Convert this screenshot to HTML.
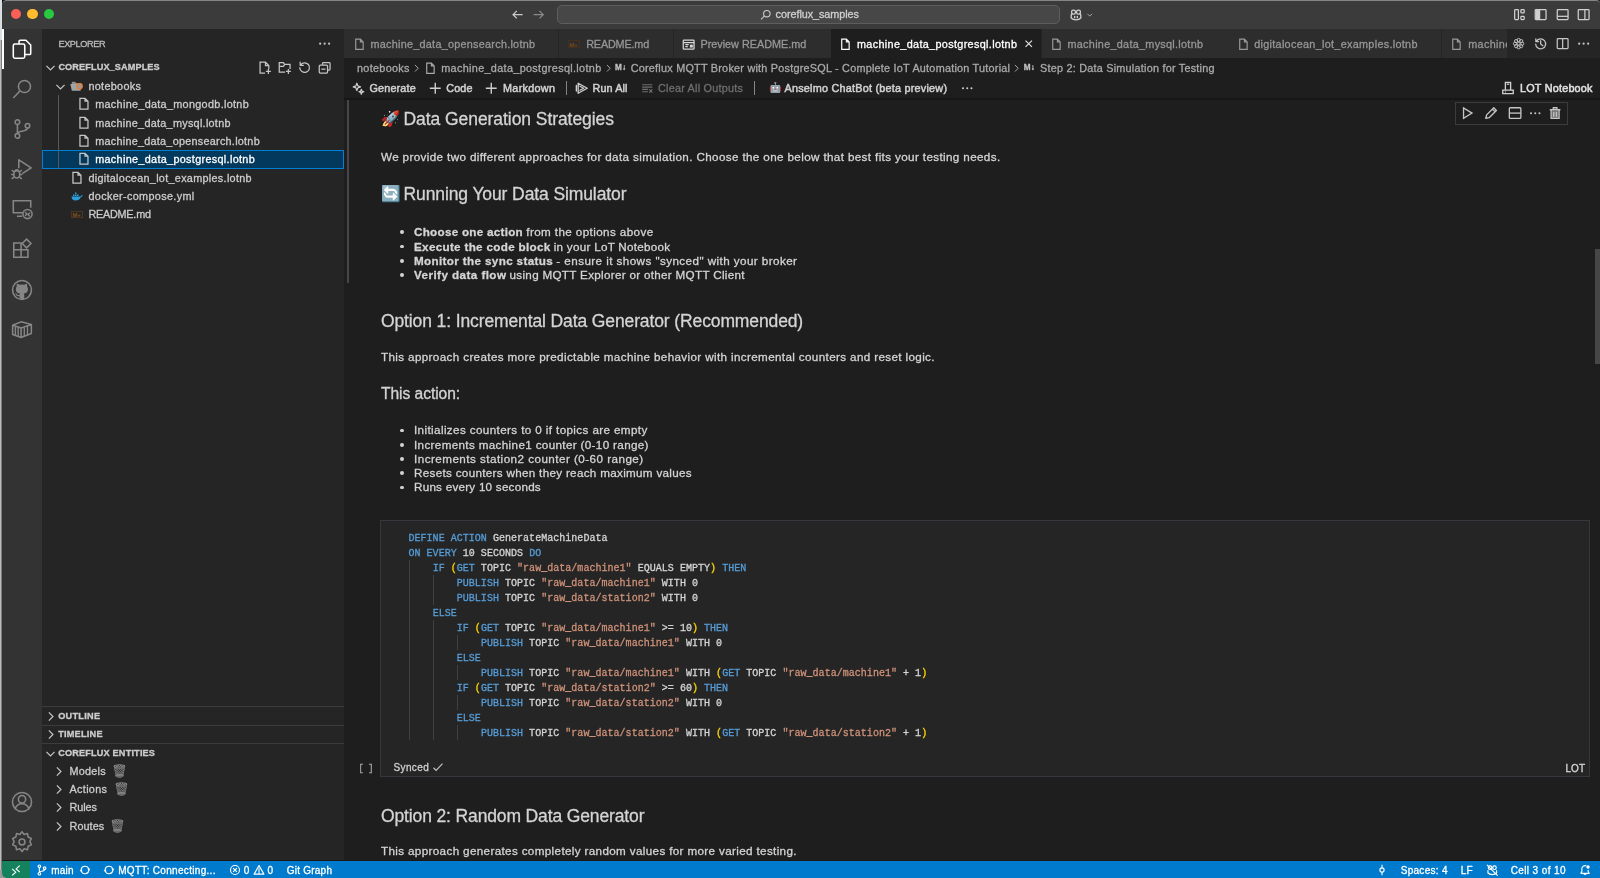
<!DOCTYPE html>
<html lang="en"><head><meta charset="utf-8"><title>machine_data_postgresql.lotnb — coreflux_samples</title>
<style>
html,body{margin:0;padding:0;background:#1e1e1e;overflow:hidden}
body{width:1600px;height:878px;position:relative;font-family:"Liberation Sans", sans-serif;font-size:10.83px;color:#ccc;will-change:transform}
.r{position:absolute;box-sizing:border-box}
.i{position:absolute;overflow:visible}
.t{position:absolute;white-space:pre;line-height:1;margin:0;padding:0;font-weight:400;-webkit-text-stroke:0.3px currentColor}
.m{font-family:"Liberation Mono", monospace}
b{font-weight:700}
.ns{-webkit-text-stroke:0}
.hv{-webkit-text-stroke:0.5px currentColor}
.g{filter:grayscale(1) brightness(.7)}
.k{color:#569cd6}.s{color:#ce9178}.p{color:#ffd700}
</style></head>
<body>
<header class="titlebar">
<div class="r" style="left:0.00px;top:0.00px;width:1600.00px;height:878.00px;background:#1e1e1e;"></div>
<div class="r" style="left:0.00px;top:0.00px;width:1.00px;height:878.00px;background:#bdbdbd;"></div>
<div class="r" style="left:1.00px;top:0.00px;width:1.00px;height:878.00px;background:#7c7c7c;"></div>
<div class="r" style="left:0.00px;top:0.00px;width:1.50px;height:40.00px;background:#d9dee3;"></div>
<div class="r" style="left:1.50px;top:0.00px;width:0.80px;height:40.00px;background:#a9adb1;"></div>
<div class="r" style="left:2.00px;top:0.00px;width:1.20px;height:4.00px;background:#0a0a0a;"></div>
<div class="r" style="left:2.00px;top:0.00px;width:1598.00px;height:29.20px;background:#3b3b3b;border-top:1px solid #858585;border-top-left-radius:5px;border-top-right-radius:4px;"></div>
<div class="r" style="left:10.80px;top:9.00px;width:10.40px;height:10.40px;background:#fe5f57;border-radius:50%;"></div>
<div class="r" style="left:27.30px;top:9.00px;width:10.40px;height:10.40px;background:#febc2e;border-radius:50%;"></div>
<div class="r" style="left:43.80px;top:9.00px;width:10.40px;height:10.40px;background:#28c840;border-radius:50%;"></div>
<svg class="i" style="left:510.85px;top:7.95px;width:13.30px;height:13.30px;color:#cccccc;" viewBox="0 0 16 16"><path fill="none" stroke="currentColor" stroke-width="1.5" stroke-linejoin="miter" stroke-linecap="butt" d="M14 8h-11.5 M7 3.5l-4.5 4.5 4.5 4.5"/></svg>
<svg class="i" style="left:532.35px;top:7.95px;width:13.30px;height:13.30px;color:#8a8a8a;" viewBox="0 0 16 16"><path fill="none" stroke="currentColor" stroke-width="1.5" stroke-linejoin="miter" stroke-linecap="butt" d="M2 8h11.5 M9 3.5l4.5 4.5-4.5 4.5"/></svg>
<div class="r" style="left:557.00px;top:4.60px;width:502.70px;height:19.60px;background:#474747;border:1px solid #5e5e5e;border-radius:5px;"></div>
<svg class="i" style="left:759.75px;top:8.85px;width:11.50px;height:11.50px;color:#cccccc;" viewBox="0 0 16 16"><circle fill="none" stroke="currentColor" stroke-width="1.5" stroke-linejoin="miter" stroke-linecap="butt" cx="9.5" cy="6.5" r="4.5"/><path fill="none" stroke="currentColor" stroke-width="1.5" stroke-linejoin="miter" stroke-linecap="butt" d="M6.3 9.7l-4.8 4.8"/></svg>
<div class="t" style="left:775.60px;top:9.23px;color:#d0d0d0;letter-spacing:-0.058px;">coreflux_samples</div>
<svg class="i" style="left:1069.00px;top:7.60px;width:14.00px;height:14.00px;color:#d0d0d0;" viewBox="0 0 16 16"><path fill="none" stroke="currentColor" stroke-width="1.5" stroke-linejoin="round" stroke-linecap="round" d="M2.5 8.5v3c1.5 1.5 3.5 2 5.500 2s4-.5 5.500-2v-3 M2.500 8.500c0-1 .500-1.500 1-2 M13.500 8.500c0-1-.500-1.500-1-2"/><rect fill="none" stroke="currentColor" stroke-width="1.5" stroke-linejoin="round" stroke-linecap="round" x="3" y="2.500" width="4.300" height="4.500" rx="1.800"/><rect fill="none" stroke="currentColor" stroke-width="1.5" stroke-linejoin="round" stroke-linecap="round" x="8.700" y="2.500" width="4.300" height="4.500" rx="1.800"/><path fill="none" stroke="currentColor" stroke-width="1.5" stroke-linejoin="round" stroke-linecap="round" d="M6.500 9.500v1.500 M9.500 9.500v1.500"/></svg>
<svg class="i" style="left:1086.25px;top:11.25px;width:7.50px;height:7.50px;color:#d0d0d0;" viewBox="0 0 16 16"><path fill="none" stroke="currentColor" stroke-width="1.5" stroke-linejoin="miter" stroke-linecap="butt" d="M3 6l5 5 5-5"/></svg>
<svg class="i" style="left:1512.85px;top:8.15px;width:13.30px;height:13.30px;color:#d0d0d0;" viewBox="0 0 16 16"><rect fill="none" stroke="currentColor" stroke-width="1.5" stroke-linejoin="miter" stroke-linecap="butt" x="2" y="2" width="4.500" height="12" rx="1"/><rect fill="none" stroke="currentColor" stroke-width="1.5" stroke-linejoin="miter" stroke-linecap="butt" x="9.500" y="2" width="4" height="4" rx="1"/><rect fill="none" stroke="currentColor" stroke-width="1.5" stroke-linejoin="miter" stroke-linecap="butt" x="9.500" y="10" width="4" height="4" rx="1"/></svg>
<svg class="i" style="left:1534.15px;top:8.15px;width:13.30px;height:13.30px;color:#d0d0d0;" viewBox="0 0 16 16"><rect fill="none" stroke="currentColor" stroke-width="1.5" stroke-linejoin="miter" stroke-linecap="butt" x="1.5" y="2" width="13" height="12" rx="1"/><path fill="currentColor" stroke="none" d="M2 2.500h5.500v11h-5.500z"/></svg>
<svg class="i" style="left:1555.65px;top:8.15px;width:13.30px;height:13.30px;color:#d0d0d0;" viewBox="0 0 16 16"><rect fill="none" stroke="currentColor" stroke-width="1.5" stroke-linejoin="miter" stroke-linecap="butt" x="1.5" y="2" width="13" height="12" rx="1"/><path fill="none" stroke="currentColor" stroke-width="1.5" stroke-linejoin="miter" stroke-linecap="butt" d="M1.500 10h13"/></svg>
<svg class="i" style="left:1577.35px;top:8.15px;width:13.30px;height:13.30px;color:#d0d0d0;" viewBox="0 0 16 16"><rect fill="none" stroke="currentColor" stroke-width="1.5" stroke-linejoin="miter" stroke-linecap="butt" x="1.5" y="2" width="13" height="12" rx="1"/><path fill="none" stroke="currentColor" stroke-width="1.5" stroke-linejoin="miter" stroke-linecap="butt" d="M9.500 2v12"/></svg>
</header>
<nav class="activitybar">
<div class="r" style="left:2.00px;top:29.20px;width:40.00px;height:831.60px;background:#333333;"></div>
<div class="r" style="left:2.00px;top:29.20px;width:1.70px;height:40.00px;background:#ffffff;"></div>
<svg class="i" style="left:11.00px;top:38.00px;width:22.00px;height:22.00px;color:#ffffff;" viewBox="0 0 24 24"><path fill="none" stroke="currentColor" stroke-width="1.7" stroke-linejoin="round" stroke-linecap="round" d="M8.800 6v-2.300a1.200 1.200 0 0 1 1.200-1.200h6.300l5.200 5.200v9.100a1.200 1.200 0 0 1-1.200 1.200h-4.800"/><rect fill="none" stroke="currentColor" stroke-width="1.7" stroke-linejoin="round" stroke-linecap="round" x="2.500" y="6.500" width="12.500" height="15.500" rx="1.800"/></svg>
<svg class="i" style="left:11.00px;top:78.00px;width:22.00px;height:22.00px;color:#868686;" viewBox="0 0 24 24"><circle fill="none" stroke="currentColor" stroke-width="1.7" stroke-linejoin="miter" stroke-linecap="butt" cx="14.700" cy="9.300" r="6.600"/><path fill="none" stroke="currentColor" stroke-width="1.7" stroke-linejoin="miter" stroke-linecap="butt" d="M10 14l-7.500 7.800"/></svg>
<svg class="i" style="left:11.00px;top:118.00px;width:22.00px;height:22.00px;color:#868686;" viewBox="0 0 24 24"><circle fill="none" stroke="currentColor" stroke-width="1.7" stroke-linejoin="miter" stroke-linecap="butt" cx="7" cy="4.500" r="2.500"/><circle fill="none" stroke="currentColor" stroke-width="1.7" stroke-linejoin="miter" stroke-linecap="butt" cx="7" cy="19.500" r="2.500"/><circle fill="none" stroke="currentColor" stroke-width="1.7" stroke-linejoin="miter" stroke-linecap="butt" cx="18" cy="8.500" r="2.500"/><path fill="none" stroke="currentColor" stroke-width="1.7" stroke-linejoin="round" stroke-linecap="round" d="M7 7v10 M18 11c0 4.500-11 2.500-11 6"/></svg>
<svg class="i" style="left:11.00px;top:158.00px;width:22.00px;height:22.00px;color:#868686;" viewBox="0 0 24 24"><path fill="none" stroke="currentColor" stroke-width="1.7" stroke-linejoin="round" stroke-linecap="round" d="M8.500 10.500v-8.500l13.500 8.800-9 5.800"/><ellipse fill="none" stroke="currentColor" stroke-width="1.7" stroke-linejoin="miter" stroke-linecap="butt" cx="6.300" cy="17.800" rx="3.300" ry="4"/><path fill="none" stroke="currentColor" stroke-width="1.5" stroke-linejoin="round" stroke-linecap="round" d="M1.200 13.500l2.300 1.700 M11.400 13.500l-2.300 1.700 M0.800 18h2.200 M9.600 18h2.200 M1.200 22.500l2.300-1.900 M11.400 22.500l-2.300-1.900 M4.200 14.300a2.200 2.200 0 0 1 4.200 0"/></svg>
<svg class="i" style="left:11.00px;top:198.00px;width:22.00px;height:22.00px;color:#868686;" viewBox="0 0 24 24"><path fill="none" stroke="currentColor" stroke-width="1.7" stroke-linejoin="miter" stroke-linecap="butt" d="M12.500 16h-10v-13h19v7.500 M6.500 20h5.500"/><circle fill="none" stroke="currentColor" stroke-width="1.7" stroke-linejoin="miter" stroke-linecap="butt" cx="18" cy="17.500" r="5"/><path fill="none" stroke="currentColor" stroke-width="1.5" stroke-linejoin="round" stroke-linecap="round" d="M15.800 15.800l1.600 1.600-1.600 1.600 M20.200 16.400l-1.600 1.600 1.600 1.600" stroke-width="1"/></svg>
<svg class="i" style="left:11.30px;top:237.30px;width:22.00px;height:22.00px;color:#868686;" viewBox="0 0 24 24"><path fill="none" stroke="currentColor" stroke-width="1.7" stroke-linejoin="miter" stroke-linecap="butt" d="M3 6.500h8v15.500h-8z M3 14h15.500v8h-7.500 M18.500 14v8"/><path fill="none" stroke="currentColor" stroke-width="1.7" stroke-linejoin="miter" stroke-linecap="butt" d="M17 2.300l4.800 4.800-4.800 4.800-4.800-4.800z"/></svg>
<svg class="i" style="left:11.00px;top:278.50px;width:22.00px;height:22.00px;color:#868686;" viewBox="0 0 24 24"><circle fill="none" stroke="currentColor" stroke-width="1.7" stroke-linejoin="miter" stroke-linecap="butt" cx="12" cy="12" r="10.300"/><path fill="currentColor" d="M9.300 21.300v-2.600c-2.900.600-3.500-1.300-3.500-1.300-.5-1.200-1.100-1.500-1.100-1.500-.9-.6.100-.6.100-.6 1 .1 1.600 1.100 1.600 1.100.9 1.600 2.400 1.100 3 .9.100-.7.400-1.100.6-1.400-2.300-.3-4.700-1.200-4.700-5.100 0-1.100.4-2 1.100-2.800-.1-.3-.5-1.400.1-2.800 0 0 .9-.3 2.800 1.100a9.500 9.500 0 0 1 5.200 0c2-1.400 2.800-1.100 2.800-1.100.6 1.400.2 2.500.1 2.800.7.800 1.100 1.700 1.100 2.800 0 3.900-2.400 4.800-4.700 5.100.4.300.7 1 .7 2v4.400z"/></svg>
<svg class="i" style="left:11.00px;top:318.00px;width:22.00px;height:22.00px;color:#868686;" viewBox="0 0 24 24"><path fill="none" stroke="currentColor" stroke-width="1.7" stroke-linejoin="round" stroke-linecap="round" d="M1.800 8l9.200-3.800 11.200 3v9.800l-11.200 4.200-9.200-3.200z M1.800 8l9.200 3 11.200-3.800 M11 11v10"/><path fill="none" stroke="currentColor" stroke-width="1.5" stroke-linejoin="round" stroke-linecap="round" d="M4.800 9.800v8.500 M7.800 10.800v8.700 M14.500 10.800v8.700 M18 9.500v8.800"/></svg>
<svg class="i" style="left:11.00px;top:790.50px;width:22.00px;height:22.00px;color:#868686;" viewBox="0 0 24 24"><circle fill="none" stroke="currentColor" stroke-width="1.7" stroke-linejoin="miter" stroke-linecap="butt" cx="12" cy="12" r="10.400"/><circle fill="none" stroke="currentColor" stroke-width="1.7" stroke-linejoin="miter" stroke-linecap="butt" cx="12" cy="9" r="4"/><path fill="none" stroke="currentColor" stroke-width="1.7" stroke-linejoin="round" stroke-linecap="round" d="M4.500 19.500c1.200-3.800 3.800-5.500 7.500-5.500s6.300 1.700 7.500 5.500"/></svg>
<svg class="i" style="left:11.00px;top:830.50px;width:22.00px;height:22.00px;color:#868686;" viewBox="0 0 24 24"><circle fill="none" stroke="currentColor" stroke-width="1.7" stroke-linejoin="miter" stroke-linecap="butt" cx="12" cy="12" r="3.200"/><path fill="none" stroke="currentColor" stroke-width="1.7" stroke-linejoin="round" stroke-linecap="round" stroke-width="1.500" d="M12 0.800l2.300 3 3.700-1 .7 3.800 3.500 1.500-1.600 3.500 1.600 3.500-3.500 1.500-.7 3.800-3.700-1-2.300 3-2.300-3-3.700 1-.7-3.800-3.500-1.500 1.600-3.500-1.600-3.500 3.500-1.500.7-3.800 3.700 1z"/></svg>
</nav>
<aside class="sidebar">
<div class="r" style="left:42.00px;top:29.20px;width:302.00px;height:831.60px;background:#252526;"></div>
<div class="t" style="left:58.40px;top:39.64px;font-size:9.17px;color:#bbbbbb;letter-spacing:-0.368px;">EXPLORER</div>
<svg class="i" style="left:318.35px;top:37.35px;width:13.30px;height:13.30px;color:#c5c5c5;" viewBox="0 0 16 16"><circle fill="currentColor" stroke="none" cx="2.600" cy="8" r="1.300"/><circle fill="currentColor" stroke="none" cx="8" cy="8" r="1.300"/><circle fill="currentColor" stroke="none" cx="13.400" cy="8" r="1.300"/></svg>
<svg class="i" style="left:43.50px;top:61.00px;width:13.00px;height:13.00px;color:#c5c5c5;" viewBox="0 0 16 16"><path fill="none" stroke="currentColor" stroke-width="1.5" stroke-linejoin="miter" stroke-linecap="butt" d="M3 6l5 5 5-5"/></svg>
<div class="t" style="left:58.40px;top:63.44px;font-size:9.17px;color:#cccccc;font-weight:700;letter-spacing:0.105px;">COREFLUX_SAMPLES</div>
<svg class="i" style="left:258.35px;top:60.85px;width:13.30px;height:13.30px;color:#c5c5c5;" viewBox="0 0 16 16"><path fill="none" stroke="currentColor" stroke-width="1.5" stroke-linejoin="miter" stroke-linecap="butt" d="M8.500 14.500h-6v-13h6.500l4 4v4 M9 1.500v4h4 M12.500 9.500v6 M9.500 12.500h6"/></svg>
<svg class="i" style="left:277.85px;top:60.85px;width:13.30px;height:13.30px;color:#c5c5c5;" viewBox="0 0 16 16"><path fill="none" stroke="currentColor" stroke-width="1.5" stroke-linejoin="miter" stroke-linecap="butt" d="M8.500 13.500h-7v-11.500h5l1.500 2h6.500v5.500 M1.500 6.500h5l1.500-2.500 M12.500 9.500v6 M9.500 12.500h6"/></svg>
<svg class="i" style="left:297.85px;top:60.85px;width:13.30px;height:13.30px;color:#c5c5c5;" viewBox="0 0 16 16"><path fill="none" stroke="currentColor" stroke-width="1.5" stroke-linejoin="round" stroke-linecap="round" d="M3 5A5.800 5.800 0 1 1 2.200 8 M2.600 1.300v3.900h3.900"/></svg>
<svg class="i" style="left:317.85px;top:60.85px;width:13.30px;height:13.30px;color:#c5c5c5;" viewBox="0 0 16 16"><path fill="none" stroke="currentColor" stroke-width="1.5" stroke-linejoin="round" stroke-linecap="round" d="M5.500 4v-1a1 1 0 0 1 1-1h7a1 1 0 0 1 1 1v7a1 1 0 0 1-1 1h-1.500"/><rect fill="none" stroke="currentColor" stroke-width="1.5" stroke-linejoin="round" stroke-linecap="round" x="1.500" y="5" width="10" height="9.500" rx="1.200"/><path fill="none" stroke="currentColor" stroke-width="1.5" stroke-linejoin="miter" stroke-linecap="butt" d="M4 9.800h5"/></svg>
<div class="r" style="left:42.00px;top:150.33px;width:302.00px;height:18.33px;background:#04395e;border:1px solid #007fd4;"></div>
<div class="r" style="left:58.30px;top:95.33px;width:1.00px;height:73.33px;background:#585858;"></div>
<svg class="i" style="left:54.00px;top:79.70px;width:13.00px;height:13.00px;color:#c5c5c5;" viewBox="0 0 16 16"><path fill="none" stroke="currentColor" stroke-width="1.5" stroke-linejoin="miter" stroke-linecap="butt" d="M3 6l5 5 5-5"/></svg>
<svg class="i" style="left:70.2px;top:81.20px;width:14px;height:11px" viewBox="0 0 14 11"><path d="M1.800 0.800h3.300l1 1.200h5.200v1.500h-9.500z" fill="#8e8e8e"/><path d="M0.300 3h11.500l-1.300 6.800h-8.700z" fill="#a3a3a3"/><circle cx="9.600" cy="5.300" r="2.700" fill="#9a9a9a" stroke="#ec7a2c" stroke-width="1.100"/></svg>
<div class="t" style="left:88.40px;top:80.83px;letter-spacing:0.327px;">notebooks</div>
<svg class="i" style="left:76.55px;top:97.48px;width:13.50px;height:13.50px;color:#c5c5c5;" viewBox="0 0 16 16"><path fill="none" stroke="currentColor" stroke-width="1.5" stroke-linejoin="miter" stroke-linecap="butt" d="M3.5 1.5h6l3.5 3.5v9.5h-9.5z M9.5 1.5v3.5h3.5"/></svg>
<div class="t" style="left:95.20px;top:99.17px;color:#cccccc;letter-spacing:0.312px;">machine_data_mongodb.lotnb</div>
<svg class="i" style="left:76.55px;top:115.82px;width:13.50px;height:13.50px;color:#c5c5c5;" viewBox="0 0 16 16"><path fill="none" stroke="currentColor" stroke-width="1.5" stroke-linejoin="miter" stroke-linecap="butt" d="M3.5 1.5h6l3.5 3.5v9.5h-9.5z M9.5 1.5v3.5h3.5"/></svg>
<div class="t" style="left:95.20px;top:117.50px;color:#cccccc;letter-spacing:0.282px;">machine_data_mysql.lotnb</div>
<svg class="i" style="left:76.55px;top:134.15px;width:13.50px;height:13.50px;color:#c5c5c5;" viewBox="0 0 16 16"><path fill="none" stroke="currentColor" stroke-width="1.5" stroke-linejoin="miter" stroke-linecap="butt" d="M3.5 1.5h6l3.5 3.5v9.5h-9.5z M9.5 1.5v3.5h3.5"/></svg>
<div class="t" style="left:95.20px;top:135.83px;color:#cccccc;letter-spacing:0.263px;">machine_data_opensearch.lotnb</div>
<svg class="i" style="left:76.55px;top:152.48px;width:13.50px;height:13.50px;color:#c5c5c5;" viewBox="0 0 16 16"><path fill="none" stroke="currentColor" stroke-width="1.5" stroke-linejoin="miter" stroke-linecap="butt" d="M3.5 1.5h6l3.5 3.5v9.5h-9.5z M9.5 1.5v3.5h3.5"/></svg>
<div class="t" style="left:95.20px;top:154.16px;color:#ffffff;letter-spacing:0.321px;">machine_data_postgresql.lotnb</div>
<svg class="i" style="left:69.95px;top:170.81px;width:13.50px;height:13.50px;color:#c5c5c5;" viewBox="0 0 16 16"><path fill="none" stroke="currentColor" stroke-width="1.5" stroke-linejoin="miter" stroke-linecap="butt" d="M3.5 1.5h6l3.5 3.5v9.5h-9.5z M9.5 1.5v3.5h3.5"/></svg>
<div class="t" style="left:88.40px;top:172.50px;letter-spacing:0.303px;">digitalocean_lot_examples.lotnb</div>
<svg class="i" style="left:71px;top:190.50px;width:12px;height:11px" viewBox="0 0 12 11"><path d="M0.500 5.500h9c.5-1.500 1.500-1.500 2.200-1.200-.3 1-1 1.500-1.800 1.700-.8 2.500-2.900 3.500-5.400 3.500s-3.800-1.500-4-4z" fill="#2b9fd9"/><path d="M2 3.500h1.500v1.500h-1.500z M4 3.500h1.500v1.500h-1.500z M6 3.500h1.500v1.500h-1.500z M4 1.500h1.500v1.500h-1.500z" fill="#2b9fd9"/></svg>
<div class="t" style="left:88.40px;top:190.83px;letter-spacing:0.348px;">docker-compose.yml</div>
<div class="r" style="left:70.60px;top:210.63px;width:12.20px;height:7.80px;border:1px solid #4d3520;"></div>
<div class="t ns" style="left:72.60px;top:211.85px;font-size:6.00px;color:#86511f;font-weight:700;letter-spacing:-0.316px;">M+</div>
<div class="t" style="left:88.40px;top:209.16px;letter-spacing:-0.224px;">README.md</div>
<div class="r" style="left:42.00px;top:706.20px;width:302.00px;height:0.90px;background:#3c3c3c;"></div>
<svg class="i" style="left:43.80px;top:709.70px;width:13.00px;height:13.00px;color:#c5c5c5;" viewBox="0 0 16 16"><path fill="none" stroke="currentColor" stroke-width="1.5" stroke-linejoin="miter" stroke-linecap="butt" d="M6 3l5 5-5 5"/></svg>
<div class="t" style="left:58.20px;top:712.04px;font-size:9.17px;font-weight:700;letter-spacing:0.269px;">OUTLINE</div>
<div class="r" style="left:42.00px;top:724.60px;width:302.00px;height:0.90px;background:#3c3c3c;"></div>
<svg class="i" style="left:43.80px;top:728.00px;width:13.00px;height:13.00px;color:#c5c5c5;" viewBox="0 0 16 16"><path fill="none" stroke="currentColor" stroke-width="1.5" stroke-linejoin="miter" stroke-linecap="butt" d="M6 3l5 5-5 5"/></svg>
<div class="t" style="left:58.20px;top:730.34px;font-size:9.17px;font-weight:700;letter-spacing:0.224px;">TIMELINE</div>
<div class="r" style="left:42.00px;top:742.90px;width:302.00px;height:0.90px;background:#3c3c3c;"></div>
<svg class="i" style="left:43.50px;top:746.50px;width:13.00px;height:13.00px;color:#c5c5c5;" viewBox="0 0 16 16"><path fill="none" stroke="currentColor" stroke-width="1.5" stroke-linejoin="miter" stroke-linecap="butt" d="M3 6l5 5 5-5"/></svg>
<div class="t" style="left:58.20px;top:748.74px;font-size:9.17px;font-weight:700;letter-spacing:0.167px;">COREFLUX ENTITIES</div>
<svg class="i" style="left:51.60px;top:764.60px;width:13.00px;height:13.00px;color:#c5c5c5;" viewBox="0 0 16 16"><path fill="none" stroke="currentColor" stroke-width="1.5" stroke-linejoin="miter" stroke-linecap="butt" d="M6 3l5 5-5 5"/></svg>
<div class="t" style="left:69.50px;top:765.73px;letter-spacing:0.259px;">Models</div>
<div class="t g" style="left:111.80px;top:764.74px;font-size:12.00px;color:#999;">🗑️</div>
<svg class="i" style="left:51.60px;top:782.93px;width:13.00px;height:13.00px;color:#c5c5c5;" viewBox="0 0 16 16"><path fill="none" stroke="currentColor" stroke-width="1.5" stroke-linejoin="miter" stroke-linecap="butt" d="M6 3l5 5-5 5"/></svg>
<div class="t" style="left:69.50px;top:784.07px;letter-spacing:0.331px;">Actions</div>
<div class="t g" style="left:113.70px;top:783.07px;font-size:12.00px;color:#999;">🗑️</div>
<svg class="i" style="left:51.60px;top:801.27px;width:13.00px;height:13.00px;color:#c5c5c5;" viewBox="0 0 16 16"><path fill="none" stroke="currentColor" stroke-width="1.5" stroke-linejoin="miter" stroke-linecap="butt" d="M6 3l5 5-5 5"/></svg>
<div class="t" style="left:69.50px;top:802.40px;letter-spacing:-0.047px;">Rules</div>
<svg class="i" style="left:51.60px;top:819.60px;width:13.00px;height:13.00px;color:#c5c5c5;" viewBox="0 0 16 16"><path fill="none" stroke="currentColor" stroke-width="1.5" stroke-linejoin="miter" stroke-linecap="butt" d="M6 3l5 5-5 5"/></svg>
<div class="t" style="left:69.50px;top:820.73px;letter-spacing:0.078px;">Routes</div>
<div class="t g" style="left:110.10px;top:819.74px;font-size:12.00px;color:#999;">🗑️</div>
</aside>
<footer class="statusbar">
<div class="r" style="left:2.00px;top:860.00px;width:1598.00px;height:1.00px;background:#191919;"></div>
<div class="r" style="left:2.00px;top:860.80px;width:1598.00px;height:17.20px;background:#007acc;"></div>
<div class="r" style="left:0.00px;top:870.00px;width:6.00px;height:8.00px;background:#9a9a9a;"></div>
<div class="r" style="left:2.00px;top:860.80px;width:28.00px;height:17.20px;background:#16825d;border-bottom-left-radius:5px;"></div>
<svg class="i" style="left:10.05px;top:864.55px;width:11.50px;height:11.50px;color:#ffffff;" viewBox="0 0 16 16"><path fill="none" stroke="currentColor" stroke-width="1.5" stroke-linejoin="miter" stroke-linecap="butt" d="M3 5.500l5 4.500-5 4.500 M13.500 1l-5 4.500 5 4.500"/></svg>
<svg class="i" style="left:35.70px;top:864.30px;width:12.00px;height:12.00px;color:#ffffff;" viewBox="0 0 16 16"><circle fill="none" stroke="currentColor" stroke-width="1.5" stroke-linejoin="miter" stroke-linecap="butt" cx="4.5" cy="3" r="1.7"/><circle fill="none" stroke="currentColor" stroke-width="1.5" stroke-linejoin="miter" stroke-linecap="butt" cx="4.5" cy="13" r="1.7"/><circle fill="none" stroke="currentColor" stroke-width="1.5" stroke-linejoin="miter" stroke-linecap="butt" cx="11.5" cy="5.5" r="1.7"/><path fill="none" stroke="currentColor" stroke-width="1.5" stroke-linejoin="round" stroke-linecap="round" d="M4.5 4.7v6.6 M11.5 7.2c0 3-7 2-7 4"/></svg>
<div class="t" style="left:51.20px;top:866.24px;font-size:10.00px;color:#fff;letter-spacing:0.271px;">main</div>
<svg class="i" style="left:78.70px;top:864.30px;width:12.00px;height:12.00px;color:#ffffff;" viewBox="0 0 16 16"><path fill="none" stroke="currentColor" stroke-width="1.5" stroke-linejoin="round" stroke-linecap="round" d="M2.800 7.500A5.300 5.300 0 0 1 13 6.500 M13.200 8.500A5.300 5.300 0 0 1 3 9.500"/><path fill="currentColor" stroke="none" d="M11 6.200h4.200l-2.100 2.900z M5 9.800h-4.200l2.100-2.900z"/></svg>
<svg class="i" style="left:103.00px;top:864.30px;width:12.00px;height:12.00px;color:#ffffff;" viewBox="0 0 16 16"><path fill="none" stroke="currentColor" stroke-width="1.5" stroke-linejoin="round" stroke-linecap="round" d="M2.800 7.500A5.300 5.300 0 0 1 13 6.500 M13.200 8.500A5.300 5.300 0 0 1 3 9.500"/><path fill="currentColor" stroke="none" d="M11 6.200h4.200l-2.100 2.900z M5 9.800h-4.200l2.100-2.900z"/></svg>
<div class="t" style="left:118.20px;top:866.24px;font-size:10.00px;color:#fff;letter-spacing:0.311px;">MQTT: Connecting...</div>
<svg class="i" style="left:228.50px;top:864.30px;width:12.00px;height:12.00px;color:#ffffff;" viewBox="0 0 16 16"><circle fill="none" stroke="currentColor" stroke-width="1.5" stroke-linejoin="miter" stroke-linecap="butt" cx="8" cy="8" r="6"/><path fill="none" stroke="currentColor" stroke-width="1.5" stroke-linejoin="miter" stroke-linecap="butt" d="M5.5 5.5l5 5 M10.5 5.5l-5 5"/></svg>
<div class="t" style="left:243.70px;top:866.24px;font-size:10.00px;color:#fff;">0</div>
<svg class="i" style="left:252.70px;top:864.30px;width:12.00px;height:12.00px;color:#ffffff;" viewBox="0 0 16 16"><path fill="none" stroke="currentColor" stroke-width="1.5" stroke-linejoin="round" stroke-linecap="round" d="M8 2l6.5 11.5h-13z M8 6v4 M8 11.3v.8"/></svg>
<div class="t" style="left:267.50px;top:866.24px;font-size:10.00px;color:#fff;">0</div>
<div class="t" style="left:286.70px;top:866.24px;font-size:10.00px;color:#fff;letter-spacing:0.243px;">Git Graph</div>
<svg class="i" style="left:1376.00px;top:864.30px;width:12.00px;height:12.00px;color:#ffffff;" viewBox="0 0 16 16"><circle fill="none" stroke="currentColor" stroke-width="1.5" stroke-linejoin="miter" stroke-linecap="butt" cx="8" cy="8" r="2.8"/><path fill="none" stroke="currentColor" stroke-width="1.5" stroke-linejoin="miter" stroke-linecap="butt" d="M8 1v4.2 M8 10.8v4.2"/></svg>
<div class="t" style="left:1400.70px;top:866.24px;font-size:10.00px;color:#fff;letter-spacing:0.289px;">Spaces: 4</div>
<div class="t" style="left:1460.70px;top:866.24px;font-size:10.00px;color:#fff;letter-spacing:0.128px;">LF</div>
<svg class="i" style="left:1485.55px;top:864.05px;width:12.50px;height:12.50px;color:#ffffff;" viewBox="0 0 16 16"><path fill="none" stroke="currentColor" stroke-width="1.5" stroke-linejoin="round" stroke-linecap="round" d="M2.5 8.5v3c1.5 1.5 3.5 2 5.500 2s4-.5 5.500-2v-3"/><rect fill="none" stroke="currentColor" stroke-width="1.5" stroke-linejoin="round" stroke-linecap="round" x="3" y="2.500" width="4.300" height="4.500" rx="1.800"/><rect fill="none" stroke="currentColor" stroke-width="1.5" stroke-linejoin="round" stroke-linecap="round" x="8.700" y="2.500" width="4.300" height="4.500" rx="1.800"/><path fill="none" stroke="currentColor" stroke-width="1.5" stroke-linejoin="round" stroke-linecap="round" d="M1.500 1.500l13 13"/></svg>
<div class="t" style="left:1510.70px;top:866.24px;font-size:10.00px;color:#fff;letter-spacing:0.382px;">Cell 3 of 10</div>
<svg class="i" style="left:1579.20px;top:864.30px;width:12.00px;height:12.00px;color:#ffffff;" viewBox="0 0 16 16"><path fill="none" stroke="currentColor" stroke-width="1.5" stroke-linejoin="round" stroke-linecap="round" d="M9 2.2A4.3 4.3 0 0 0 3.8 6.5v3.5l-1.3 2.5h11l-1.3-2.5v-1.5 M6.5 13a1.6 1.6 0 0 0 3 0"/><circle fill="currentColor" stroke="none" cx="12" cy="4" r="2.3"/></svg>
</footer>
<div class="tabs">
<div class="r" style="left:344.00px;top:29.20px;width:1256.00px;height:29.20px;background:#252526;"></div>
<div class="r" style="left:344.00px;top:29.20px;width:214.20px;height:29.20px;background:#2d2d2d;"></div>
<svg class="i" style="left:352.75px;top:37.95px;width:12.50px;height:12.50px;color:#9a9a9a;" viewBox="0 0 16 16"><path fill="none" stroke="currentColor" stroke-width="1.5" stroke-linejoin="miter" stroke-linecap="butt" d="M3.5 1.5h6l3.5 3.5v9.5h-9.5z M9.5 1.5v3.5h3.5"/></svg>
<div class="t" style="left:370.50px;top:38.53px;color:#969696;letter-spacing:0.263px;">machine_data_opensearch.lotnb</div>
<div class="r" style="left:559.00px;top:29.20px;width:114.20px;height:29.20px;background:#2d2d2d;"></div>
<div class="r" style="left:567.60px;top:40.30px;width:12.20px;height:7.80px;border:1px solid #46301d;"></div>
<div class="t ns" style="left:569.60px;top:41.52px;font-size:6.00px;color:#76481d;font-weight:700;letter-spacing:-0.316px;">M+</div>
<div class="t" style="left:586.20px;top:38.53px;color:#969696;letter-spacing:-0.174px;">README.md</div>
<div class="r" style="left:674.00px;top:29.20px;width:156.50px;height:29.20px;background:#2d2d2d;"></div>
<svg class="i" style="left:682.05px;top:37.55px;width:13.30px;height:13.30px;color:#d8d8d8;" viewBox="0 0 16 16"><rect fill="none" stroke="currentColor" stroke-width="1.5" stroke-linejoin="miter" stroke-linecap="butt" x="1.500" y="2.500" width="13" height="11" rx="1"/><path fill="none" stroke="currentColor" stroke-width="1.5" stroke-linejoin="miter" stroke-linecap="butt" d="M1.500 5.500h13 M4 8h4 M4 10.500h3"/><rect fill="currentColor" stroke="none" x="9.500" y="8" width="3.500" height="3.500"/></svg>
<div class="t" style="left:700.50px;top:38.53px;color:#969696;letter-spacing:-0.013px;">Preview README.md</div>
<div class="r" style="left:831.30px;top:29.20px;width:209.40px;height:29.20px;background:#1e1e1e;"></div>
<svg class="i" style="left:838.95px;top:37.95px;width:12.50px;height:12.50px;color:#ffffff;" viewBox="0 0 16 16"><path fill="none" stroke="currentColor" stroke-width="1.5" stroke-linejoin="miter" stroke-linecap="butt" d="M3.5 1.5h6l3.5 3.5v9.5h-9.5z M9.5 1.5v3.5h3.5"/></svg>
<div class="t" style="left:857.00px;top:38.53px;color:#ffffff;letter-spacing:0.339px;">machine_data_postgresql.lotnb</div>
<div class="r" style="left:1041.50px;top:29.20px;width:186.00px;height:29.20px;background:#2d2d2d;"></div>
<svg class="i" style="left:1049.55px;top:37.95px;width:12.50px;height:12.50px;color:#9a9a9a;" viewBox="0 0 16 16"><path fill="none" stroke="currentColor" stroke-width="1.5" stroke-linejoin="miter" stroke-linecap="butt" d="M3.5 1.5h6l3.5 3.5v9.5h-9.5z M9.5 1.5v3.5h3.5"/></svg>
<div class="t" style="left:1067.50px;top:38.53px;color:#969696;letter-spacing:0.291px;">machine_data_mysql.lotnb</div>
<div class="r" style="left:1228.30px;top:29.20px;width:212.90px;height:29.20px;background:#2d2d2d;"></div>
<svg class="i" style="left:1236.75px;top:37.95px;width:12.50px;height:12.50px;color:#9a9a9a;" viewBox="0 0 16 16"><path fill="none" stroke="currentColor" stroke-width="1.5" stroke-linejoin="miter" stroke-linecap="butt" d="M3.5 1.5h6l3.5 3.5v9.5h-9.5z M9.5 1.5v3.5h3.5"/></svg>
<div class="t" style="left:1254.20px;top:38.53px;color:#969696;letter-spacing:0.306px;">digitalocean_lot_examples.lotnb</div>
<div class="r" style="left:1442.00px;top:29.20px;width:65.00px;height:29.20px;background:#2d2d2d;"></div>
<svg class="i" style="left:1450.05px;top:37.95px;width:12.50px;height:12.50px;color:#9a9a9a;" viewBox="0 0 16 16"><path fill="none" stroke="currentColor" stroke-width="1.5" stroke-linejoin="miter" stroke-linecap="butt" d="M3.5 1.5h6l3.5 3.5v9.5h-9.5z M9.5 1.5v3.5h3.5"/></svg>
<div class="r" style="left:1468.2px;top:29.2px;width:38.8px;height:29.2px;overflow:hidden"><div class="t" style="left:0;top:9.33px;color:#969696;letter-spacing:0.36px">machine_data_mongodb.lotnb</div></div>
<svg class="i" style="left:1023.05px;top:38.45px;width:11.50px;height:11.50px;color:#e8e8e8;" viewBox="0 0 16 16"><path fill="none" stroke="currentColor" stroke-width="1.5" stroke-linejoin="miter" stroke-linecap="butt" d="M3.5 3.5l9 9 M12.5 3.5l-9 9"/></svg>
<svg class="i" style="left:1512.35px;top:37.35px;width:13.30px;height:13.30px;color:#c5c5c5;" viewBox="0 0 16 16"><g fill="none" stroke="currentColor" stroke-width="1.1"><circle cx="12.40" cy="8.00" r="1.9"/><circle cx="11.11" cy="11.11" r="1.9"/><circle cx="8.00" cy="12.40" r="1.9"/><circle cx="4.89" cy="11.11" r="1.9"/><circle cx="3.60" cy="8.00" r="1.9"/><circle cx="4.89" cy="4.89" r="1.9"/><circle cx="8.00" cy="3.60" r="1.9"/><circle cx="11.11" cy="4.89" r="1.9"/><circle cx="8" cy="8" r="1.7"/></g></svg>
<svg class="i" style="left:1533.95px;top:37.35px;width:13.30px;height:13.30px;color:#c5c5c5;" viewBox="0 0 16 16"><path fill="none" stroke="currentColor" stroke-width="1.5" stroke-linejoin="round" stroke-linecap="round" d="M2.8 5.3A6 6 0 1 1 2 8.5 M2.2 2.2v3.3h3.3 M8 4.5v4l2.7 2"/></svg>
<svg class="i" style="left:1556.35px;top:37.35px;width:13.30px;height:13.30px;color:#c5c5c5;" viewBox="0 0 16 16"><rect fill="none" stroke="currentColor" stroke-width="1.5" stroke-linejoin="miter" stroke-linecap="butt" x="1.500" y="2" width="13" height="12" rx="1"/><path fill="none" stroke="currentColor" stroke-width="1.5" stroke-linejoin="miter" stroke-linecap="butt" d="M8 2v12"/></svg>
<svg class="i" style="left:1577.35px;top:37.35px;width:13.30px;height:13.30px;color:#c5c5c5;" viewBox="0 0 16 16"><circle fill="currentColor" stroke="none" cx="2.600" cy="8" r="1.300"/><circle fill="currentColor" stroke="none" cx="8" cy="8" r="1.300"/><circle fill="currentColor" stroke="none" cx="13.400" cy="8" r="1.300"/></svg>
</div>
<div class="breadcrumbs">
<div class="t" style="left:357.00px;top:62.83px;color:#a9a9a9;letter-spacing:0.314px;">notebooks</div>
<svg class="i" style="left:411.45px;top:62.75px;width:10.50px;height:10.50px;color:#a9a9a9;" viewBox="0 0 16 16"><path fill="none" stroke="currentColor" stroke-width="1.5" stroke-linejoin="miter" stroke-linecap="butt" d="M6 3l5 5-5 5"/></svg>
<svg class="i" style="left:423.95px;top:61.75px;width:12.50px;height:12.50px;color:#a9a9a9;" viewBox="0 0 16 16"><path fill="none" stroke="currentColor" stroke-width="1.5" stroke-linejoin="miter" stroke-linecap="butt" d="M3.5 1.5h6l3.5 3.5v9.5h-9.5z M9.5 1.5v3.5h3.5"/></svg>
<div class="t" style="left:441.20px;top:62.83px;color:#a9a9a9;letter-spacing:0.339px;">machine_data_postgresql.lotnb</div>
<svg class="i" style="left:603.25px;top:62.75px;width:10.50px;height:10.50px;color:#a9a9a9;" viewBox="0 0 16 16"><path fill="none" stroke="currentColor" stroke-width="1.5" stroke-linejoin="miter" stroke-linecap="butt" d="M6 3l5 5-5 5"/></svg>
<div class="t" style="left:615.00px;top:64.36px;font-size:8.20px;color:#c0c0c0;font-weight:700;letter-spacing:0.200px;">M↓</div>
<div class="t" style="left:630.70px;top:62.83px;color:#a9a9a9;letter-spacing:0.237px;">Coreflux MQTT Broker with PostgreSQL - Complete IoT Automation Tutorial</div>
<svg class="i" style="left:1011.45px;top:62.75px;width:10.50px;height:10.50px;color:#a9a9a9;" viewBox="0 0 16 16"><path fill="none" stroke="currentColor" stroke-width="1.5" stroke-linejoin="miter" stroke-linecap="butt" d="M6 3l5 5-5 5"/></svg>
<div class="t" style="left:1023.70px;top:64.36px;font-size:8.20px;color:#c0c0c0;font-weight:700;letter-spacing:0.200px;">M↓</div>
<div class="t" style="left:1040.00px;top:62.83px;color:#a9a9a9;letter-spacing:0.234px;">Step 2: Data Simulation for Testing</div>
</div>
<div class="notebook-toolbar">
<svg class="i" style="left:352.20px;top:81.50px;width:13.00px;height:13.00px;color:#d0d0d0;" viewBox="0 0 16 16"><path fill="none" stroke="currentColor" stroke-width="1.5" stroke-linejoin="round" stroke-linecap="round" d="M6 1.5l1.2 3.3 3.3 1.2-3.3 1.2-1.2 3.3-1.2-3.3-3.3-1.2 3.3-1.2z M11.5 9l.8 2.2 2.2.8-2.2.8-.8 2.2-.8-2.2-2.2-.8 2.2-.8z"/></svg>
<div class="t hv" style="left:369.50px;top:82.93px;color:#d0d0d0;letter-spacing:0.149px;">Generate</div>
<svg class="i" style="left:427.75px;top:80.75px;width:14.50px;height:14.50px;color:#d0d0d0;" viewBox="0 0 16 16"><path fill="none" stroke="currentColor" stroke-width="1.5" stroke-linejoin="miter" stroke-linecap="butt" d="M8 2v12 M2 8h12"/></svg>
<div class="t hv" style="left:446.20px;top:82.93px;color:#d0d0d0;letter-spacing:0.136px;">Code</div>
<svg class="i" style="left:484.05px;top:80.75px;width:14.50px;height:14.50px;color:#d0d0d0;" viewBox="0 0 16 16"><path fill="none" stroke="currentColor" stroke-width="1.5" stroke-linejoin="miter" stroke-linecap="butt" d="M8 2v12 M2 8h12"/></svg>
<div class="t hv" style="left:503.00px;top:82.93px;color:#d0d0d0;letter-spacing:0.292px;">Markdown</div>
<div class="r" style="left:566.20px;top:81.20px;width:1.10px;height:13.60px;background:#858585;"></div>
<svg class="i" style="left:574.65px;top:80.75px;width:14.50px;height:14.50px;color:#d0d0d0;" viewBox="0 0 16 16"><path fill="none" stroke="currentColor" stroke-width="1.5" stroke-linejoin="round" stroke-linecap="round" d="M3.500 2.500v11l10-5.500z"/><path fill="none" stroke="currentColor" stroke-width="1.5" stroke-linejoin="round" stroke-linecap="round" stroke-width="1" d="M1.500 5v6 M5.500 5.800l4 2.200-4 2.200"/></svg>
<div class="t hv" style="left:592.50px;top:82.93px;color:#d0d0d0;letter-spacing:0.115px;">Run All</div>
<svg class="i" style="left:640.55px;top:81.75px;width:12.50px;height:12.50px;color:#6e6e6e;" viewBox="0 0 16 16"><path fill="none" stroke="currentColor" stroke-width="1.5" stroke-linejoin="miter" stroke-linecap="butt" d="M1.5 3.5h13 M1.5 6.5h13 M1.5 9.5h7.5 M1.5 12.5h7.5 M10.5 9.5l4 4 M14.5 9.5l-4 4"/></svg>
<div class="t" style="left:658.00px;top:82.93px;color:#6e6e6e;letter-spacing:0.222px;">Clear All Outputs</div>
<div class="r" style="left:753.70px;top:81.20px;width:1.10px;height:13.60px;background:#858585;"></div>
<div class="t" style="left:769.30px;top:82.97px;font-size:10.20px;">🤖</div>
<div class="t hv" style="left:784.50px;top:82.93px;color:#d0d0d0;letter-spacing:0.228px;">Anselmo ChatBot (beta preview)</div>
<svg class="i" style="left:960.95px;top:81.75px;width:12.50px;height:12.50px;color:#d0d0d0;" viewBox="0 0 16 16"><circle fill="currentColor" stroke="none" cx="2.600" cy="8" r="1.300"/><circle fill="currentColor" stroke="none" cx="8" cy="8" r="1.300"/><circle fill="currentColor" stroke="none" cx="13.400" cy="8" r="1.300"/></svg>
<svg class="i" style="left:1500.70px;top:80.60px;width:14.00px;height:14.00px;color:#d0d0d0;" viewBox="0 0 16 16"><path fill="none" stroke="currentColor" stroke-width="1.5" stroke-linejoin="miter" stroke-linecap="butt" d="M5 1.500h6v9h-6z M2 10.500h12v4h-12z M6.500 3.500h3 M4.500 12.500h1"/></svg>
<div class="t hv" style="left:1520.00px;top:82.93px;color:#e0e0e0;letter-spacing:0.206px;">LOT Notebook</div>
<div class="r" style="left:344.00px;top:98.20px;width:1256.00px;height:1.40px;background:#161616;"></div>
</div>
<div class="cell-toolbar">
<div class="r" style="left:346.50px;top:99.50px;width:2.00px;height:183.50px;background:#45454a;"></div>
<div class="r" style="left:1455.20px;top:102.10px;width:112.40px;height:23.00px;background:#1e1e1e;border:1px solid #3c3c3c;"></div>
<svg class="i" style="left:1459.90px;top:106.30px;width:14.20px;height:14.20px;color:#c5c5c5;" viewBox="0 0 16 16"><path fill="none" stroke="currentColor" stroke-width="1.5" stroke-linejoin="miter" stroke-linecap="butt" d="M4 2.200v11.600l9.500-5.800z"/></svg>
<svg class="i" style="left:1483.70px;top:106.30px;width:14.20px;height:14.20px;color:#c5c5c5;" viewBox="0 0 16 16"><path fill="none" stroke="currentColor" stroke-width="1.5" stroke-linejoin="round" stroke-linecap="round" d="M2 14l1-4 8-8 3 3-8 8z M9.5 3.5l3 3"/></svg>
<svg class="i" style="left:1507.60px;top:106.30px;width:14.20px;height:14.20px;color:#c5c5c5;" viewBox="0 0 16 16"><rect fill="none" stroke="currentColor" stroke-width="1.5" stroke-linejoin="miter" stroke-linecap="butt" x="1.500" y="2" width="13" height="12" rx="1"/><path fill="none" stroke="currentColor" stroke-width="1.5" stroke-linejoin="miter" stroke-linecap="butt" d="M1.500 8h13"/></svg>
<svg class="i" style="left:1528.95px;top:106.95px;width:12.50px;height:12.50px;color:#c5c5c5;" viewBox="0 0 16 16"><circle fill="currentColor" stroke="none" cx="2.600" cy="8" r="1.300"/><circle fill="currentColor" stroke="none" cx="8" cy="8" r="1.300"/><circle fill="currentColor" stroke="none" cx="13.400" cy="8" r="1.300"/></svg>
<svg class="i" style="left:1548.00px;top:106.30px;width:14.20px;height:14.20px;color:#c5c5c5;" viewBox="0 0 16 16"><path fill="none" stroke="currentColor" stroke-width="1.5" stroke-linejoin="miter" stroke-linecap="butt" d="M3.500 4.500v9.500h9v-9.500 M2 4.200h12 M6 4v-2h4v2 M6.500 6.500v5.500 M9.500 6.500v5.500"/><path fill="currentColor" stroke="none" d="M4 5h8v8.500h-8z" opacity=".5"/></svg>
<div class="r" style="left:1595.00px;top:249.00px;width:5.00px;height:114.80px;background:#474747;"></div>
<div class="r" style="left:346.30px;top:99.50px;width:0.00px;height:0.00px;"></div>
<div class="r" style="left:346.50px;top:99.50px;width:2.00px;height:183.50px;background:#45454a;"></div>
</div>
<main class="markdown-cell">
<div class="t" style="left:381.30px;top:111.35px;font-size:15.30px;">🚀</div>
<h2 class="t" style="left:403.50px;top:110.89px;font-size:17.50px;color:#d4d4d4;letter-spacing:-0.063px;">Data Generation Strategies</h2>
<p class="t" style="left:381.00px;top:151.12px;font-size:11.67px;color:#d4d4d4;letter-spacing:0.369px;">We provide two different approaches for data simulation. Choose the one below that best fits your testing needs.</p>
<div class="t" style="left:380.80px;top:186.23px;font-size:15.80px;">🔄</div>
<h2 class="t" style="left:403.50px;top:185.89px;font-size:17.50px;color:#d4d4d4;letter-spacing:-0.104px;">Running Your Data Simulator</h2>
<div class="r" style="left:400.30px;top:230.40px;width:3.90px;height:3.90px;background:#d4d4d4;border-radius:50%;"></div>
<div class="t" style="left:414.00px;top:226.32px;font-size:11.67px;color:#d4d4d4;font-weight:700;letter-spacing:0.276px;">Choose one action</div>
<div class="t" style="left:522.70px;top:226.32px;font-size:11.67px;color:#d4d4d4;letter-spacing:0.394px;"> from the options above</div>
<div class="r" style="left:400.30px;top:244.60px;width:3.90px;height:3.90px;background:#d4d4d4;border-radius:50%;"></div>
<div class="t" style="left:414.00px;top:240.52px;font-size:11.67px;color:#d4d4d4;font-weight:700;letter-spacing:0.316px;">Execute the code block</div>
<div class="t" style="left:550.20px;top:240.52px;font-size:11.67px;color:#d4d4d4;letter-spacing:0.276px;"> in your LoT Notebook</div>
<div class="r" style="left:400.30px;top:258.80px;width:3.90px;height:3.90px;background:#d4d4d4;border-radius:50%;"></div>
<div class="t" style="left:414.00px;top:254.72px;font-size:11.67px;color:#d4d4d4;font-weight:700;letter-spacing:0.358px;">Monitor the sync status</div>
<div class="t" style="left:552.70px;top:254.72px;font-size:11.67px;color:#d4d4d4;letter-spacing:0.427px;"> - ensure it shows "synced" with your broker</div>
<div class="r" style="left:400.30px;top:272.90px;width:3.90px;height:3.90px;background:#d4d4d4;border-radius:50%;"></div>
<div class="t" style="left:414.00px;top:268.82px;font-size:11.67px;color:#d4d4d4;font-weight:700;letter-spacing:0.432px;">Verify data flow</div>
<div class="t" style="left:506.00px;top:268.82px;font-size:11.67px;color:#d4d4d4;letter-spacing:0.305px;"> using MQTT Explorer or other MQTT Client</div>
<h3 class="t" style="left:381.00px;top:312.89px;font-size:17.50px;color:#d4d4d4;letter-spacing:-0.118px;">Option 1: Incremental Data Generator (Recommended)</h3>
<p class="t" style="left:381.00px;top:350.72px;font-size:11.67px;color:#d4d4d4;letter-spacing:0.363px;">This approach creates more predictable machine behavior with incremental counters and reset logic.</p>
<h4 class="t" style="left:381.00px;top:386.19px;font-size:15.60px;color:#d4d4d4;letter-spacing:-0.050px;">This action:</h4>
<div class="r" style="left:400.30px;top:428.50px;width:3.90px;height:3.90px;background:#d4d4d4;border-radius:50%;"></div>
<div class="t" style="left:414.00px;top:424.42px;font-size:11.67px;color:#d4d4d4;letter-spacing:0.384px;">Initializes counters to 0 if topics are empty</div>
<div class="r" style="left:400.30px;top:442.70px;width:3.90px;height:3.90px;background:#d4d4d4;border-radius:50%;"></div>
<div class="t" style="left:414.00px;top:438.62px;font-size:11.67px;color:#d4d4d4;letter-spacing:0.348px;">Increments machine1 counter (0-10 range)</div>
<div class="r" style="left:400.30px;top:456.80px;width:3.90px;height:3.90px;background:#d4d4d4;border-radius:50%;"></div>
<div class="t" style="left:414.00px;top:452.72px;font-size:11.67px;color:#d4d4d4;letter-spacing:0.461px;">Increments station2 counter (0-60 range)</div>
<div class="r" style="left:400.30px;top:471.00px;width:3.90px;height:3.90px;background:#d4d4d4;border-radius:50%;"></div>
<div class="t" style="left:414.00px;top:466.92px;font-size:11.67px;color:#d4d4d4;letter-spacing:0.311px;">Resets counters when they reach maximum values</div>
<div class="r" style="left:400.30px;top:485.50px;width:3.90px;height:3.90px;background:#d4d4d4;border-radius:50%;"></div>
<div class="t" style="left:414.00px;top:481.42px;font-size:11.67px;color:#d4d4d4;letter-spacing:0.244px;">Runs every 10 seconds</div>
</main>
<section class="code-cell">
<div class="r" style="left:380.20px;top:520.00px;width:1209.60px;height:256.70px;background:#252526;border:1px solid #37373d;"></div>
<div class="t m" style="left:408.50px;top:534.07px;font-size:10.00px;color:#d4d4d4;letter-spacing:0.030px;"><span class="k">DEFINE ACTION</span> GenerateMachineData</div>
<div class="t m" style="left:408.50px;top:549.07px;font-size:10.00px;color:#d4d4d4;letter-spacing:0.030px;"><span class="k">ON EVERY</span> 10 SECONDS <span class="k">DO</span></div>
<div class="t m" style="left:408.50px;top:564.07px;font-size:10.00px;color:#d4d4d4;letter-spacing:0.030px;">    <span class="k">IF</span> <span class="p">(</span><span class="k">GET</span> TOPIC <span class="s">"raw_data/machine1"</span> EQUALS EMPTY<span class="p">)</span> <span class="k">THEN</span></div>
<div class="t m" style="left:408.50px;top:579.07px;font-size:10.00px;color:#d4d4d4;letter-spacing:0.030px;">        <span class="k">PUBLISH</span> TOPIC <span class="s">"raw_data/machine1"</span> WITH 0</div>
<div class="t m" style="left:408.50px;top:594.07px;font-size:10.00px;color:#d4d4d4;letter-spacing:0.030px;">        <span class="k">PUBLISH</span> TOPIC <span class="s">"raw_data/station2"</span> WITH 0</div>
<div class="t m" style="left:408.50px;top:609.07px;font-size:10.00px;color:#d4d4d4;letter-spacing:0.030px;">    <span class="k">ELSE</span></div>
<div class="t m" style="left:408.50px;top:624.07px;font-size:10.00px;color:#d4d4d4;letter-spacing:0.030px;">        <span class="k">IF</span> <span class="p">(</span><span class="k">GET</span> TOPIC <span class="s">"raw_data/machine1"</span> &gt;= 10<span class="p">)</span> <span class="k">THEN</span></div>
<div class="t m" style="left:408.50px;top:639.07px;font-size:10.00px;color:#d4d4d4;letter-spacing:0.030px;">            <span class="k">PUBLISH</span> TOPIC <span class="s">"raw_data/machine1"</span> WITH 0</div>
<div class="t m" style="left:408.50px;top:654.07px;font-size:10.00px;color:#d4d4d4;letter-spacing:0.030px;">        <span class="k">ELSE</span></div>
<div class="t m" style="left:408.50px;top:669.07px;font-size:10.00px;color:#d4d4d4;letter-spacing:0.030px;">            <span class="k">PUBLISH</span> TOPIC <span class="s">"raw_data/machine1"</span> WITH <span class="p">(</span><span class="k">GET</span> TOPIC <span class="s">"raw_data/machine1"</span> + 1<span class="p">)</span></div>
<div class="t m" style="left:408.50px;top:684.07px;font-size:10.00px;color:#d4d4d4;letter-spacing:0.030px;">        <span class="k">IF</span> <span class="p">(</span><span class="k">GET</span> TOPIC <span class="s">"raw_data/station2"</span> &gt;= 60<span class="p">)</span> <span class="k">THEN</span></div>
<div class="t m" style="left:408.50px;top:699.07px;font-size:10.00px;color:#d4d4d4;letter-spacing:0.030px;">            <span class="k">PUBLISH</span> TOPIC <span class="s">"raw_data/station2"</span> WITH 0</div>
<div class="t m" style="left:408.50px;top:714.07px;font-size:10.00px;color:#d4d4d4;letter-spacing:0.030px;">        <span class="k">ELSE</span></div>
<div class="t m" style="left:408.50px;top:729.07px;font-size:10.00px;color:#d4d4d4;letter-spacing:0.030px;">            <span class="k">PUBLISH</span> TOPIC <span class="s">"raw_data/station2"</span> WITH <span class="p">(</span><span class="k">GET</span> TOPIC <span class="s">"raw_data/station2"</span> + 1<span class="p">)</span></div>
<div class="r" style="left:409.30px;top:560.00px;width:0.90px;height:180.00px;background:#404040;"></div>
<div class="r" style="left:433.40px;top:575.00px;width:0.90px;height:30.00px;background:#404040;"></div>
<div class="r" style="left:433.40px;top:620.00px;width:0.90px;height:120.00px;background:#404040;"></div>
<div class="r" style="left:456.60px;top:635.00px;width:0.90px;height:15.00px;background:#404040;"></div>
<div class="r" style="left:456.60px;top:665.00px;width:0.90px;height:15.00px;background:#404040;"></div>
<div class="r" style="left:456.60px;top:695.00px;width:0.90px;height:15.00px;background:#404040;"></div>
<div class="r" style="left:456.60px;top:725.00px;width:0.90px;height:15.00px;background:#404040;"></div>
<div class="t m" style="left:358.20px;top:763.59px;font-size:9.50px;color:#a0a0a0;letter-spacing:-0.800px;">[ ]</div>
<div class="t" style="left:393.40px;top:762.93px;font-size:10.00px;color:#d0d0d0;letter-spacing:0.408px;">Synced</div>
<svg class="i" style="left:431.70px;top:761.30px;width:12.00px;height:12.00px;color:#c5c5c5;" viewBox="0 0 16 16"><path fill="none" stroke="currentColor" stroke-width="1.5" stroke-linejoin="miter" stroke-linecap="butt" d="M2 9l3.500 3.500 8.500-9"/></svg>
<div class="t" style="left:1565.50px;top:763.53px;font-size:10.00px;color:#d8d8d8;letter-spacing:0.023px;">LOT</div>
</section>
<section class="markdown-cell-2">
<h3 class="t" style="left:381.00px;top:807.99px;font-size:17.50px;color:#d4d4d4;letter-spacing:-0.134px;">Option 2: Random Data Generator</h3>
<p class="t" style="left:381.00px;top:844.82px;font-size:11.67px;color:#d4d4d4;letter-spacing:0.354px;">This approach generates completely random values for more varied testing.</p>
</section>
</body></html>
